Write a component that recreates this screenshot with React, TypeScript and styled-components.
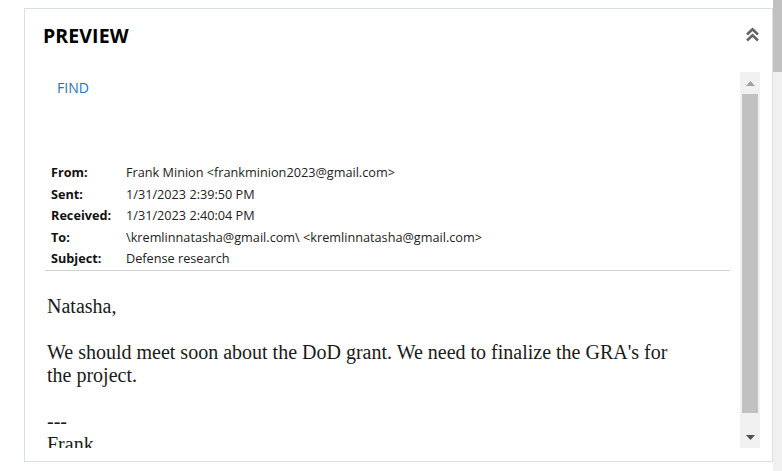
import React from "react";
import styled, { createGlobalStyle } from "styled-components";

const GlobalStyle = createGlobalStyle`
  html, body { margin: 0; padding: 0; background: #ffffff; overflow: hidden; }
  body { font-family: "Open Sans", "Liberation Sans", sans-serif; }
`;

const Page = styled.div`
  display: flex;
  width: 782px;
  height: 471px;
`;

const Main = styled.div`
  flex: 1;
  display: flex;
  padding: 8px 0 9px 24px;
  min-width: 0;
`;

const PageScroll = styled.div`
  width: 9px;
  background: #f0f0f0;
  display: flex;
  flex-direction: column;
`;

const PageThumb = styled.div`
  height: 72px;
  background: #c1c1c1;
`;

const Panel = styled.section`
  flex: 1;
  border: 1px solid #d5e0e7;
  display: flex;
  flex-direction: column;
  min-width: 0;
`;

const Header = styled.header`
  height: 63px;
  box-sizing: border-box;
  padding: 13px 12px 0 18px;
  display: flex;
  justify-content: space-between;
  align-items: flex-start;
`;

const Title = styled.h2`
  margin: 0;
  font-family: "Open Sans", sans-serif;
  font-weight: 700;
  font-size: 19.5px;
  color: #000;
  letter-spacing: 0.1px;
`;

const CollapseBtn = styled.button`
  border: 0;
  background: none;
  padding: 0;
  margin-top: 5px;
  width: 15px;
  height: 15px;
  display: flex;
  cursor: pointer;
`;

const Body = styled.div`
  flex: 1;
  display: flex;
  min-height: 0;
  padding: 0 12px 13px 20px;
  gap: 10px;
`;

const Viewport = styled.div`
  flex: 1;
  overflow: hidden;
  min-width: 0;
`;

const FindLink = styled.a`
  display: inline-block;
  margin: 6px 0 0 12px;
  font-family: "Open Sans", sans-serif;
  font-size: 14px;
  color: #1576c2;
  text-decoration: none;
  cursor: pointer;
`;

const MetaTable = styled.div`
  margin-top: 64px;
  padding-left: 6px;
  display: grid;
  grid-template-columns: 75px 1fr;
  font-family: "Open Sans", sans-serif;
  font-size: 12.7px;
  line-height: 21.5px;
  color: #222;
  border-bottom: 1px solid #d3d3d3;
  padding-bottom: 0.5px;
`;

const MetaLabel = styled.div`
  font-weight: 700;
  color: #111;
`;

const MetaValue = styled.div`
  white-space: nowrap;
`;

const Message = styled.div`
  margin-top: 24px;
  padding-left: 2px;
  width: 640px;
  font-family: "Liberation Serif", "Times New Roman", serif;
  font-size: 20px;
  line-height: 23px;
  color: #1a1a1a;
`;

const Line = styled.div`
  min-height: 23px;
`;

const ScrollBar = styled.div`
  width: 20px;
  background: #f1f1f1;
  display: flex;
  flex-direction: column;
`;

const ArrowBtn = styled.div`
  height: 22px;
  display: flex;
  align-items: center;
  justify-content: center;
`;

const Thumb = styled.div`
  height: 319px;
  margin: 0 2px;
  background: #c1c1c1;
`;

const Spacer = styled.div`
  flex: 1;
`;

const Tri = ({ up, color }: { up?: boolean; color: string }) => (
  <svg width="9" height="5" viewBox="0 0 9 5">
    <path d={up ? "M0 5 L4.5 0 L9 5 Z" : "M0 0 L9 0 L4.5 5 Z"} fill={color} />
  </svg>
);

const DoubleChevron = () => (
  <svg width="15" height="15" viewBox="0 0 15 15" fill="none">
    <path d="M2 7.5 L7.5 2.2 L13 7.5" stroke="#666" strokeWidth="2.6" />
    <path d="M2 13.5 L7.5 8.2 L13 13.5" stroke="#666" strokeWidth="2.6" />
  </svg>
);

const meta: [string, string][] = [
  ["From:", "Frank Minion <frankminion2023@gmail.com>"],
  ["Sent:", "1/31/2023 2:39:50 PM"],
  ["Received:", "1/31/2023 2:40:04 PM"],
  ["To:", "\\kremlinnatasha@gmail.com\\ <kremlinnatasha@gmail.com>"],
  ["Subject:", "Defense research"],
];

const lines = [
  "Natasha,",
  "",
  "We should meet soon about the DoD grant. We need to finalize the GRA's for the project.",
  "",
  "---",
  "Frank",
];

export default function App() {
  return (
    <>
      <GlobalStyle />
      <Page>
        <Main>
          <Panel>
            <Header>
              <Title>PREVIEW</Title>
              <CollapseBtn aria-label="Collapse">
                <DoubleChevron />
              </CollapseBtn>
            </Header>
            <Body>
              <Viewport>
                <FindLink>FIND</FindLink>
                <MetaTable>
                  {meta.map(([k, v]) => (
                    <React.Fragment key={k}>
                      <MetaLabel>{k}</MetaLabel>
                      <MetaValue>{v}</MetaValue>
                    </React.Fragment>
                  ))}
                </MetaTable>
                <Message>
                  {lines.map((l, i) => (
                    <Line key={i}>{l}</Line>
                  ))}
                </Message>
              </Viewport>
              <ScrollBar>
                <ArrowBtn>
                  <Tri up color="#a3a3a3" />
                </ArrowBtn>
                <Thumb />
                <Spacer />
                <ArrowBtn>
                  <Tri color="#505050" />
                </ArrowBtn>
              </ScrollBar>
            </Body>
          </Panel>
        </Main>
        <PageScroll>
          <PageThumb />
        </PageScroll>
      </Page>
    </>
  );
}
